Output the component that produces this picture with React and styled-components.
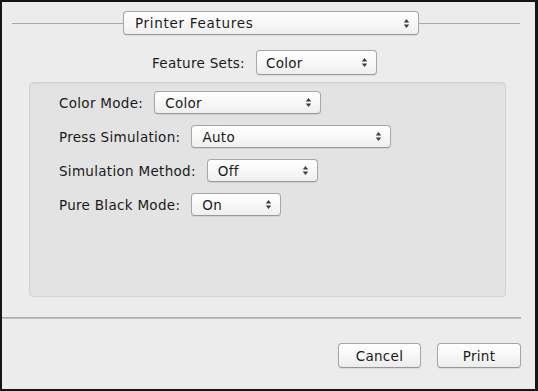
import React from "react";
import styled, { createGlobalStyle } from "styled-components";

const Global = createGlobalStyle`
  html, body { margin: 0; padding: 0; background: #ececec; }
  * { box-sizing: border-box; }
`;

const Window = styled.div`
  width: 538px;
  height: 391px;
  border: 2px solid #161616;
  border-right-width: 3px;
  background: #ececec;
  display: flex;
  flex-direction: column;
  font-family: "DejaVu Sans", "Liberation Sans", sans-serif;
  font-size: 13.5px;
  letter-spacing: 0.3px;
  color: #1a1a1a;
`;

const HeaderRow = styled.div`
  display: flex;
  align-items: center;
  margin-top: 9px;
  padding: 0 15px 0 10px;
`;

const Rule = styled.div`
  height: 1px;
  background: #a9a9a9;
  flex: ${(p) => (p.$w ? `0 0 ${p.$w}px` : "1 1 auto")};
`;

const PopupBox = styled.div`
  display: flex;
  align-items: center;
  width: ${(p) => p.$w}px;
  height: ${(p) => p.$h || 23}px;
  padding: 0 0 0 ${(p) => p.$pad || 10}px;
  border: 1px solid #a7a7a7;
  border-bottom-color: #999;
  border-radius: 4px;
  background: linear-gradient(#ffffff, #f7f7f7 55%, #efefef);
  box-shadow: 0 1px 1px rgba(0, 0, 0, 0.08);
  flex: 0 0 auto;
`;

const PopupText = styled.span`
  flex: 1 1 auto;
  white-space: nowrap;
  letter-spacing: ${(p) => p.$ls || "0.3px"};
`;

const ArrowIcon = styled.svg`
  flex: 0 0 auto;
  margin-right: 8px;
`;

const Arrows = () => (
  <ArrowIcon width="7" height="11" viewBox="0 0 7 11">
    <polygon points="3.5,1 0.8,4.6 6.2,4.6" fill="#3c3c3c" />
    <polygon points="0.8,6.4 6.2,6.4 3.5,10" fill="#3c3c3c" />
  </ArrowIcon>
);

const Popup = ({ w, h, pad, ls, children }) => (
  <PopupBox $w={w} $h={h} $pad={pad}>
    <PopupText $ls={ls}>{children}</PopupText>
    <Arrows />
  </PopupBox>
);

const FeatureRow = styled.div`
  display: flex;
  align-items: center;
  gap: 11px;
  margin-top: 15px;
  padding-left: 150px;
`;

const Label = styled.span`
  white-space: nowrap;
`;

const Panel = styled.div`
  margin: 7px 0 0 27px;
  width: 477px;
  height: 215px;
  background: #e3e3e3;
  border: 1px solid #d3d3d3;
  border-radius: 4px;
  box-shadow: inset 0 1px 1px rgba(0, 0, 0, 0.04);
  padding: 8px 0 0 29px;
  display: flex;
  flex-direction: column;
  gap: 11px;
`;

const Row = styled.div`
  display: flex;
  align-items: center;
  gap: 11px;
`;

const Separator = styled.div`
  margin-top: 20px;
  width: 519px;
  height: 2px;
  background: linear-gradient(#a3a3a3, #c9c9c9);
`;

const ButtonBar = styled.div`
  display: flex;
  justify-content: flex-end;
  gap: 16px;
  margin-top: 24px;
  padding-right: 14px;
`;

const Button = styled.div`
  width: ${(p) => p.$w}px;
  height: 25px;
  display: flex;
  align-items: center;
  justify-content: center;
  border: 1px solid #a5a5a5;
  border-bottom-color: #979797;
  border-radius: 4px;
  background: linear-gradient(#ffffff, #f6f6f6 55%, #ececec);
  box-shadow: 0 1px 1px rgba(0, 0, 0, 0.08);
`;

const settings = [
  { label: "Color Mode:", value: "Color", w: 167 },
  { label: "Press Simulation:", value: "Auto", w: 200 },
  { label: "Simulation Method:", value: "Off", w: 111 },
  { label: "Pure Black Mode:", value: "On", w: 90 },
];

export default function App() {
  return (
    <>
      <Global />
      <Window>
        <HeaderRow>
          <Rule $w={111} />
          <Popup w={296} h={24} pad={11} ls="0.7px">Printer Features</Popup>
          <Rule />
        </HeaderRow>
        <FeatureRow>
          <Label>Feature Sets:</Label>
          <Popup w={121} h={25} pad={9}>Color</Popup>
        </FeatureRow>
        <Panel>
          {settings.map((s) => (
            <Row key={s.label}>
              <Label>{s.label}</Label>
              <Popup w={s.w}>{s.value}</Popup>
            </Row>
          ))}
        </Panel>
        <Separator />
        <ButtonBar>
          <Button $w={83}>Cancel</Button>
          <Button $w={84}>Print</Button>
        </ButtonBar>
      </Window>
    </>
  );
}
